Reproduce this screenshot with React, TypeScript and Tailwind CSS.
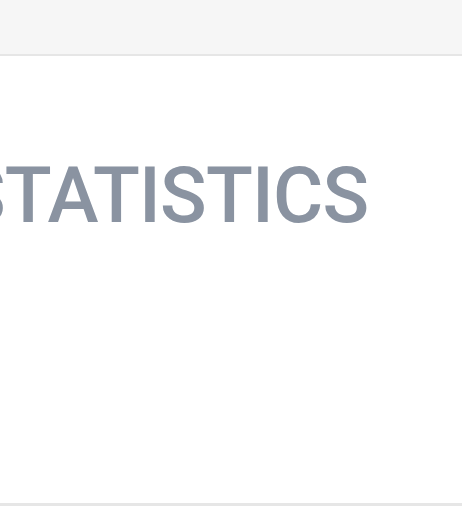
export default function App() {
  return (
    <div className="flex h-[512px] w-full flex-col overflow-hidden bg-white font-['Roboto',sans-serif]">
      {/* top toolbar strip */}
      <header className="h-[56px] shrink-0 border-b-2 border-[#e6e6e6] bg-[#f6f6f6]" />

      <main className="flex-1 bg-white pt-[102px]">
        <h1 className="-ml-[41px] whitespace-nowrap text-[77px] font-medium leading-none tracking-[-0.8px] text-[#8a93a1]">
          STATISTICS
        </h1>
      </main>

      <footer className="h-[9px] shrink-0 border-t-[3px] border-[#e6e6e6] bg-white" />
    </div>
  );
}
